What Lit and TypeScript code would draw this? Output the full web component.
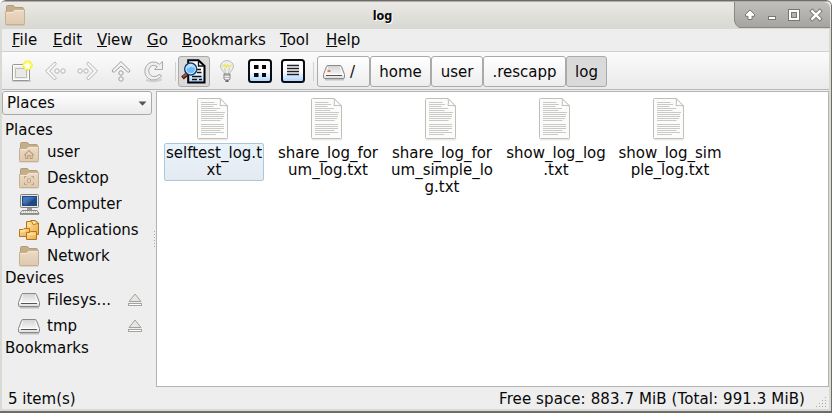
import { LitElement, html, svg, css } from "lit";
import { customElement } from "lit/decorators.js";
import { classMap } from "lit/directives/class-map.js";

const defs = svg`<defs>
  <linearGradient id="fold" x2="0" y2="1"><stop stop-color="#ecdac5"/><stop offset="1" stop-color="#dfc8ae"/></linearGradient>
  <linearGradient id="metal" x2="0" y2="1"><stop stop-color="#d2d2d2"/><stop offset=".7" stop-color="#f5f5f5"/><stop offset="1" stop-color="#ccc"/></linearGradient>
  <linearGradient id="blue" x2="0" y2="1"><stop offset=".5" stop-color="#fff"/><stop offset="1" stop-color="#a9d3ff"/></linearGradient>
  <linearGradient id="gold" x2="1" y2="1"><stop stop-color="#ffe2a0"/><stop offset="1" stop-color="#eba94a"/></linearGradient>
</defs>`;

const icon = (w: number, h: number, body: unknown) =>
  html`<svg width=${w} height=${h} viewBox="0 0 ${w} ${h}" fill="none">${defs}${body}</svg>`;

const folder = (mark: unknown = "") => icon(22, 22, svg`
  <path d="M1.5 20.6H20.5" stroke="#000" opacity=".16" stroke-width="2"/>
  <path d="M2.5 8V2.5Q2.5 1.5 3.5 1.5H9.5L11 3.5H18.5Q19.5 3.5 19.5 4.5V9" fill="#c5af8a" stroke="#b49d76"/>
  <path d="M1.5 7.5H8.7L10.7 5.5H20.5V19.5Q20.5 20.5 19.5 20.5H2.5Q1.5 20.5 1.5 19.5Z" fill="url(#fold)" stroke="#c7b08f"/>
  <path d="M2.5 8.5H9L11 6.5H19.5" stroke="#f5e8d9"/>${mark}`);
const home = svg`<path d="M6 14.3L11 9.5L16 14.3M7.7 13.5V17.5H9.8V14.5H12.2V17.5H14.3V13.5" stroke="#b9a07d" stroke-width="1.1"/>`;
const desk = svg`<path d="M6.5 11.5V9.5H8.5M13.5 9.5H15.5V11.5M15.5 15.5V17.5H13.5M8.5 17.5H6.5V15.5" stroke="#b9a07d"/><rect x="9.5" y="11.5" width="3" height="4" rx="1" stroke="#b9a07d"/>`;

const computer = icon(22, 22, svg`
  <rect x="2.5" y="1.5" width="18" height="13" rx="1" fill="#e8e8e3" stroke="#80817c"/>
  <rect x="4" y="3" width="15" height="10" fill="#204a87"/><path d="M5 4H17L5 11Z" fill="#4877b8"/><path d="M5 11L14 4H18L8 12Z" fill="#3767a9"/>
  <path d="M9 15H14V17H9Z" fill="#999"/><path d="M4 17.5H19L21 20.5H2Z" fill="#eee" stroke="#888a85"/><path d="M5 18.8H18" stroke="#aaa" stroke-dasharray="1 1"/><path d="M2 21.5H21" stroke="#999"/>`);
const apps = icon(22, 22, svg`
  <path d="M8.5 2.5H12.5V1.5H17L20.5 4V15.5H8.5Z" fill="url(#gold)" stroke="#b87613"/>
  <path d="M13.5 2L15 5.5L20 4.5" fill="#fff1c9" stroke="#b87613"/>
  <path d="M1.5 10.5H5L6 9.5H11.5V17.5H1.5Z" fill="url(#gold)" stroke="#b87613"/>
  <path d="M8.5 13.5H11.5L12.5 12.5H18.5V20.5H8.5Z" fill="url(#gold)" stroke="#b87613"/>
  <path d="M2.5 12H7.5M9.5 15H17.5M10 6.5H12.5" stroke="#ffedc0"/>`);
const drive = (led = false) => icon(24, 20, svg`<g transform=${led ? "translate(0 0)" : "translate(-1 0)"}>
  <path d="M3 17.5H22" stroke="#000" opacity=".2" stroke-width="2"/>
  <path d="M4.5 4.5Q4.8 3.5 6 3.5H18Q19.2 3.5 19.5 4.5L22.5 12.5V15.5Q22.5 16.5 21.5 16.5H2.5Q1.5 16.5 1.5 15.5V12.5Z" fill="url(#metal)" stroke="#8a8a8a"/>
  <path d="M5.7 5L3.5 12.5H20.5L18.3 5" stroke="#fff" opacity=".8"/><path d="M4 13.5H20" stroke="#555"/><path d="M3 15H21" stroke="#eee"/>
  ${led ? svg`<rect x="5.5" y="8" width="3" height="2" fill="#ee7b35"/>` : ""}</g>`);
const eject = icon(16, 14, svg`<path d="M8 1L14 8.5H2Z" fill="#e5e5e2" stroke="#a2a29f"/><rect x="1.5" y="10.5" width="13" height="2" fill="#fff" stroke="#a2a29f"/>`);

const newTab = icon(24, 24, svg`
  <path d="M2 22H21" stroke="#000" opacity=".14" stroke-width="2"/>
  <rect x="2.5" y="5.5" width="17" height="16" rx="1" fill="#eee" stroke="#969692"/><path d="M3.5 6.5H18.5V20.5H3.5Z" stroke="#fff"/><path d="M5.5 9.5H16.5V18.5H5.5Z" fill="#e9e9e7" stroke="#bcbcb8"/>
  <g transform="translate(-.4 1.4)"><circle cx="18" cy="5" r="4.7" fill="#fdfb48" stroke="#f2ed25" stroke-dasharray="2 1"/><path d="M18 .8L19.3 3.5L22.2 4L20 6L20.6 9L18 7.6L15.4 9L16 6L13.8 4L16.7 3.5Z" fill="#fffff0"/></g>`);
const arrow = (flip: boolean) => icon(24, 24, svg`<g transform=${flip ? "matrix(-1 0 0 1 24 0)" : "translate(0 0)"} fill="#f8f8f8" stroke="#b4b4b1">
  <path d="M2.5 12L11 3.5Q12.3 2.8 13 4Q13.5 4.8 12.8 5.5L6.7 12L12.8 18.5Q13.5 19.5 12.6 20.3Q11.7 21 10.8 20.2Z"/><circle cx="14" cy="12" r="2.2"/><circle cx="20" cy="12" r="2.2"/></g>`);
const up = icon(24, 24, svg`<g fill="#f3f3f3" stroke="#9e9e9b"><path d="M12 2.5L20.5 11Q21.2 12 20.3 13Q19.4 13.5 18.5 12.8L12 7L5.5 12.8Q4.6 13.5 3.7 13Q2.8 12 3.5 11Z"/><circle cx="12" cy="14" r="2.2"/><circle cx="12" cy="20" r="2.2"/></g>`);
const reload = icon(24, 24, svg`<path d="M4 21Q12 23.5 20 20.5" stroke="#000" opacity=".12" stroke-width="2"/><path d="M17.5 5.2L20.5 2.5V10.5H12.5L15.2 7.5Q12 5 8.5 7.3Q5.5 10.5 7.2 14.5Q10 19 15 17L16.8 15.6Q19 15.2 19.5 17.5Q15 22 9.5 21Q3 18.5 2.8 12.5Q3.2 5 9.8 3.1Q14 2.3 17.5 5.2Z" fill="#efefef" stroke="#a9a9a6"/>`);
const preview = icon(26, 26, svg`
  <path d="M7.2 1.2H17.5L23.5 7V23.5H7.2Z" fill="url(#blue)" stroke="#000" stroke-width="2"/><path d="M17.5 1V7H23" stroke="#111" stroke-width="1.4"/>
  <path d="M15 10.5H20M16 13.5H20.5M11 17.5H20.5M11 20.5H16M18 20.5H21" stroke="#111" stroke-width="1.6"/>
  <path d="M5.5 15.5L1.5 19" stroke="#43170b" stroke-width="4"/><path d="M5 15.5L2 18" stroke="#b05431" stroke-width="2"/>
  <circle cx="9.7" cy="10" r="6" fill="#70baf7" stroke="#163d71" stroke-width="1.5"/><circle cx="9.7" cy="10" r="4.7" stroke="#d6efff"/><path d="M6.5 9Q9 5 12.5 8" stroke="#b8e2ff" stroke-width="2"/>`);
const bulb = icon(20, 24, svg`
  <path d="M7.5 15.5Q7.3 13 5 11Q2.5 8 4 5Q5.8 1.5 10 1.5Q14.2 1.5 16 5Q17.5 8 15 11Q12.7 13 12.5 15.5Z" fill="#eeeeea" stroke="#bbb"/>
  <path d="M5.5 7L7.5 6L9 8L10.5 6L12 8L14.5 6.2" stroke="#ede65a" stroke-width="1.5"/><path d="M8.5 15L7.8 9M11.5 15L12.2 9" stroke="#c6c6bd"/>
  <path d="M7 15H13V20L11.5 21.5H8.5L7 20Z" fill="#bbb" stroke="#858585"/><path d="M7.5 17.5H12.5M7.5 19.5H12.5" stroke="#eee"/><path d="M8.5 22.3H11.5" stroke="#444"/>`);
const viewIcon = (list: boolean) => icon(24, 24, svg`<rect x="1" y="1" width="22" height="22" rx="2.5" fill="url(#blue)" stroke="#0b0d10" stroke-width="2"/>
  ${list ? svg`<path d="M6 6.5H18M6 9.5H18M6 12.5H18M6 15.5H18" stroke="#222" stroke-width="1.5"/>` : svg`<path d="M6 6H10.5V10H6ZM14 6H18V10H14ZM6 14H10.5V18H6ZM14 14H18V18H14Z" fill="#050505"/>`}`);

const page = icon(34, 44, svg`
  <path d="M2 42.5H32" stroke="#000" opacity=".08" stroke-width="2"/><path d="M1 41.5H33" stroke="#000" opacity=".06"/>
  <path d="M1.5 2.5Q1.5 1.5 2.5 1.5H24L31.5 9V40.5Q31.5 41.5 30.5 41.5H2.5Q1.5 41.5 1.5 40.5Z" fill="#fcfcfb" stroke="#bfbfba"/>
  <path d="M24 1.5Q25 5 24 8.5Q28 8 31.5 9Z" fill="#fff" stroke="#bfbfba"/>
  <path d="M5 5.5H18.5M5 7.5H21M5 9.5H17.5M5 11.5H24M5 13.5H20.5M5 15.5H29M5 17.5H28M5 19.5H28M5 21.5H27M5 23.5H24.5M5 27.5H28M5 29.5H28M5 31.5H28M5 33.5H24.5M5 35.5H28M5 37.5H20" stroke="#c9c9c7"/>`);

const controls = html`<svg width="98" height="28" viewBox="0 0 98 28" fill="none">
  <defs><linearGradient id="ctl" x2="0" y2="1"><stop stop-color="#c1c0bd"/><stop offset="1" stop-color="#a5a4a0"/></linearGradient></defs>
  <path d="M1.5 0V20Q2 23.5 6 26.5H97V7Q97 2 91 1H1.5Z" fill="url(#ctl)"/><path d="M1.5 1V20Q2 23.5 6 26.5H97" stroke="#888783"/>
  <g transform="translate(1 -1)"><path d="M16 10L20.5 14.3V16.3H18V19.5H14V16.3H11.5V14.3Z" fill="#fff" stroke="#777672"/>
  <rect x="34.5" y="16.5" width="7" height="3" fill="#fff" stroke="#777672"/>
  <rect x="56" y="11" width="8" height="8" stroke="#777672" stroke-width="4"/><rect x="56" y="11" width="8" height="8" stroke="#fff" stroke-width="2"/>
  <path d="M78.3 11.3L85.7 18.7M85.7 11.3L78.3 18.7" stroke="#777672" stroke-width="4.2" stroke-linecap="square"/><path d="M78.3 11.3L85.7 18.7M85.7 11.3L78.3 18.7" stroke="#fff" stroke-width="2.4" stroke-linecap="square"/></g></svg>`;

const menus = [["File", 41], ["Edit", 44], ["View", 50], ["Go", 35], ["Bookmarks", 98], ["Tool", 46], ["Help", 40]] as const;
const crumbs = [["/", 53], ["home", 61], ["user", 52], [".rescapp", 83], ["log", 41]] as const;
const files = [["selftest_log.t", "xt"], ["share_log_for", "um_log.txt"], ["share_log_for", "um_simple_lo", "g.txt"], ["show_log_log", ".txt"], ["show_log_sim", "ple_log.txt"]];

@customElement("app-root")
export class AppRoot extends LitElement {
  static styles = css`
    :host { display: block; width: 832px; height: 413px; font: 15px/17px "DejaVu Sans", sans-serif; color: #080808; background: #fff; }
    * { box-sizing: border-box; }
    svg { display: block; flex: none; }
    .window { height: 413px; display: flex; flex-direction: column; background: #eee; border: solid #6f6c68; border-width: 1px 1px 2px 0; border-radius: 6px 6px 0 0; overflow: hidden; }
    .title { height: 28px; flex: none; display: grid; grid-template-columns: 96px 1fr 98px; background: linear-gradient(#eae9e6, #d7d8d1); border-top: 1px solid #b0aeab; }
    .title-icon { padding: 2px 0 0 4px; }
    .title-text { text-align: center; padding: 5px 64px 0 0; font: bold 12.5px/17px "DejaVu Sans Condensed", "DejaVu Sans", sans-serif; text-shadow: 1px 1px #fff; }
    .controls { margin-top: -1px; }
    .body { flex: 1; display: flex; flex-direction: column; min-height: 0; border: solid #d9dad4; border-width: 0 2px 2px 2px; }
    .menu { height: 22px; display: flex; padding-left: 10px; flex: none; }
    .menu span { padding-top: 3px; white-space: nowrap; }
    .menu span::first-letter { text-decoration: underline; text-decoration-thickness: 1px; text-underline-offset: 1px; }
    .tools { height: 39px; flex: none; display: flex; align-items: center; border-top: 1px solid #d0d0d0; border-bottom: 1px solid #b8b8b8; background: linear-gradient(#fbfbfb, #eaeaea); padding: 2px 0 0 8px; }
    .nav { display: flex; gap: 9px; width: 165px; margin-bottom: 1px; }
    .sep { width: 1px; height: 19px; background: #d0d0d0; }
    .toggle { width: 32px; height: 31px; margin-left: 2px; border: 1px solid #aaa; border-radius: 3px; background: #dadada; display: grid; place-items: center; }
    .views { display: flex; align-items: center; gap: 9px; padding-left: 7px; width: 103px; margin-bottom: 1px; }
    .views svg:first-child { margin-right: 2px; }
    .crumbs { display: flex; margin-left: 3px; }
    .crumb { height: 31px; border: 1px solid #aaa; border-radius: 3px; background: linear-gradient(#fff, #ededed); display: flex; align-items: center; justify-content: center; gap: 4px; }
    .crumb span { padding-top: 1px; }
    .crumb:first-child { justify-content: flex-start; padding-left: 4px; }
    .crumb.current { background: #dadada; }
    .main { flex: 1; min-height: 0; display: flex; }
    .side { width: 154px; position: relative; padding-top: 1px; }
    .combo { width: 150px; height: 24px; border: 1px solid #aaa; border-radius: 3px; background: linear-gradient(#fff, #ebebeb); display: flex; align-items: center; justify-content: space-between; padding: 1px 4px 0; }
    .head { height: 18px; padding-left: 3px; line-height: 18px; }
    .head.first { margin-top: 6px; }
    .place { height: 26px; display: flex; align-items: center; padding-left: 16px; }
    .place .pic { width: 29px; }
    .place .name { width: 80px; white-space: nowrap; }
    .grip { position: absolute; right: 1px; top: 141px; width: 1px; height: 17px; background: repeating-linear-gradient(#aaa 0 1px, transparent 1px 3px); }
    .pane { width: 673px; height: 296px; margin-top: 1px; background: #fff; border: 1px solid #b4b4b4; display: flex; gap: 14px; padding: 5px 0 0 7px; align-items: flex-start; }
    .file { width: 100px; display: flex; flex-direction: column; align-items: center; }
    .file svg { margin-right: 2px; }
    .label { margin-top: 2px; width: 100px; min-height: 38px; border: 1px solid transparent; border-radius: 2px; display: flex; flex-direction: column; align-items: center; white-space: nowrap; padding-top: 1px; }
    .label.selected { background: linear-gradient(#e8f3fc, #e5eaf1); border-color: #a9c8dd; }
    .status { height: 23px; flex: none; display: flex; justify-content: space-between; padding: 5px 24px 0 6px; position: relative; }
    .free { letter-spacing: .1px; }
    .resize { position: absolute; right: 1px; bottom: 1px; }
  `;

  place(pic: unknown, name: string, removable = false) {
    return html`<div class="place"><span class="pic">${pic}</span><span class="name">${name}</span>${removable ? eject : ""}</div>`;
  }

  render() {
    return html`<div class="window">
      <div class="title"><div class="title-icon">${folder()}</div><div class="title-text">log</div><div class="controls">${controls}</div></div>
      <div class="body">
        <div class="menu">${menus.map(([m, w]) => html`<span style="width:${w}px">${m}</span>`)}</div>
        <div class="tools">
          <div class="nav">${newTab}${arrow(false)}${arrow(true)}${up}${reload}</div>
          <div class="sep"></div><div class="toggle">${preview}</div>
          <div class="views">${bulb}${viewIcon(false)}${viewIcon(true)}</div><div class="sep"></div>
          <div class="crumbs">${crumbs.map(([c, w], i) => html`<div class=${classMap({ crumb: true, current: c === "log" })} style="width:${w}px">${i ? "" : drive(true)}<span>${c}</span></div>`)}</div>
        </div>
        <div class="main">
          <div class="side">
            <div class="combo">Places<svg width="9" height="5" viewBox="0 0 9 5"><path d="M.5 .5H8.5L4.5 4.8Z" fill="#555"/></svg></div>
            <div class="head first">Places</div>
            ${this.place(folder(home), "user")}${this.place(folder(desk), "Desktop")}${this.place(computer, "Computer")}${this.place(apps, "Applications")}${this.place(folder(), "Network")}
            <div class="head">Devices</div>
            ${this.place(drive(), "Filesys...", true)}${this.place(drive(), "tmp", true)}
            <div class="head">Bookmarks</div>
            <div class="grip"></div>
          </div>
          <div class="pane">${files.map((f, i) => html`<div class="file">${page}<div class=${classMap({ label: true, selected: i === 0 })}>${f.map((l) => html`<span>${l}</span>`)}</div></div>`)}</div>
        </div>
        <div class="status"><span>5 item(s)</span><span class="free">Free space: 883.7 MiB (Total: 991.3 MiB)</span>
          <svg class="resize" width="12" height="12" viewBox="0 0 12 12"><path d="M9 1h1v1h-1zM6 4h1v1h-1zM9 4h1v1h-1zM3 7h1v1h-1zM6 7h1v1h-1zM9 7h1v1h-1zM0 10h1v1h-1zM3 10h1v1h-1zM6 10h1v1h-1zM9 10h1v1h-1z" fill="#aaa"/></svg></div>
      </div></div>`;
  }
}
